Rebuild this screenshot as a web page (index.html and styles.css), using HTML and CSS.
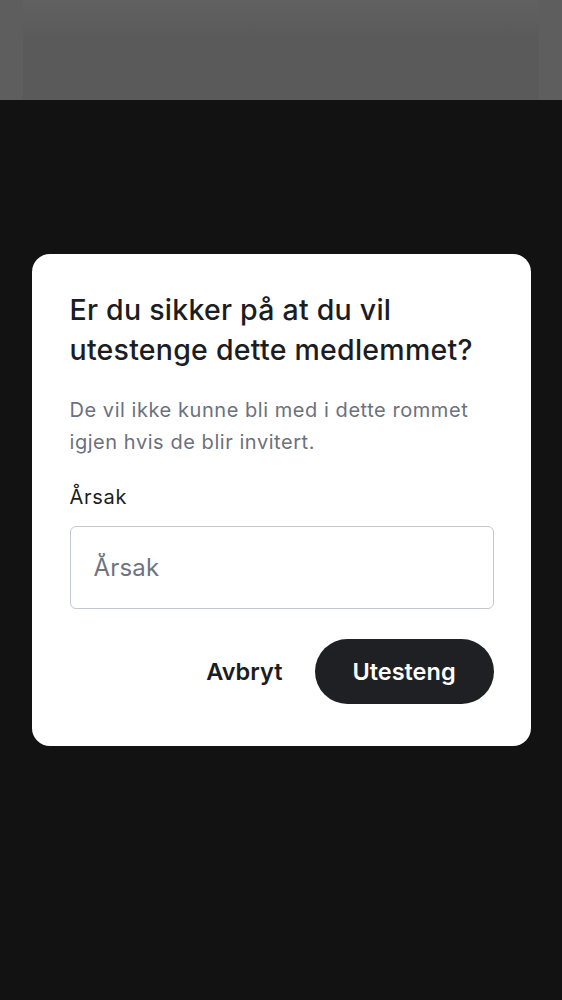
FILE: index.html
```html
<!DOCTYPE html>
<html lang="nb">
<head>
  <meta charset="UTF-8">
  <meta name="viewport" content="width=device-width, initial-scale=1.0">
  <title>Utesteng medlem</title>
  <link rel="stylesheet" href="styles.css">
</head>
<body>

  <header class="topbar"></header>
  <main class="room"></main>

  <div class="overlay">
    <form class="dialog" id="banForm">
      <h2 class="dialog-title">Er du sikker på at du vil utestenge dette medlemmet?</h2>
      <p class="dialog-text">De vil ikke kunne bli med i dette rommet igjen hvis de blir invitert.</p>

      <label class="field-label" for="reason">Årsak</label>
      <input class="field-input" type="text" id="reason" name="reason" placeholder="Årsak">

      <div class="actions">
        <button type="button" class="btn btn-link">Avbryt</button>
        <button type="submit" class="btn btn-primary">Utesteng</button>
      </div>
    </form>
  </div>

</body>
</html>
```

FILE: styles.css
```css
html, body {
  margin: 0;
  height: 100%;
}

body {
  font-family: Inter, "Noto Sans", sans-serif;
  background-color: #121212;
  display: flex;
  flex-direction: column;
}

.topbar {
  height: 100px;
  background: linear-gradient(#616161, #5a5a5a 40%);
  box-shadow: inset 23px 0 0 #5e5e5e, inset -23px 0 0 #5e5e5e;
}

.room {
  flex: 1;
  background-color: #121212;
}

.overlay {
  position: fixed;
  inset: 0;
  display: flex;
  align-items: center;
  justify-content: center;
}

.dialog {
  width: 499px;
  box-sizing: border-box;
  background: #fff;
  border-radius: 18px;
  padding: 36px 37px 42px 38px;
  color: #1b1d22;
}

.dialog-title {
  margin: 0;
  font-size: 28.5px;
  font-weight: 500;
  line-height: 40px;
  letter-spacing: 0.25px;
}

.dialog-text {
  margin: 24px 0 0;
  font-size: 20px;
  line-height: 32px;
  letter-spacing: 0.55px;
  color: #6b717d;
}

.field-label {
  display: block;
  margin-top: 26px;
  font-size: 20px;
  line-height: 26px;
  letter-spacing: 0.7px;
}

.field-input {
  display: block;
  width: 100%;
  height: 83px;
  box-sizing: border-box;
  margin-top: 16px;
  padding: 0 23px;
  border: 1.5px solid #c3c7ce;
  border-radius: 6px;
  font-family: inherit;
  font-size: 24px;
  letter-spacing: 0.2px;
  color: #1b1d22;
  outline: none;
}

.field-input::placeholder {
  color: #6e7480;
}

.actions {
  display: flex;
  justify-content: flex-end;
  align-items: center;
  gap: 32px;
  margin-top: 30px;
}

.btn {
  font-family: inherit;
  font-size: 23.5px;
  font-weight: 600;
  border: none;
  cursor: pointer;
}

.btn-link {
  background: none;
  color: #1b1d22;
  padding: 0;
}

.btn-primary {
  width: 179px;
  height: 65px;
  border-radius: 33px;
  background-color: #1f2024;
  color: #fff;
}
```
